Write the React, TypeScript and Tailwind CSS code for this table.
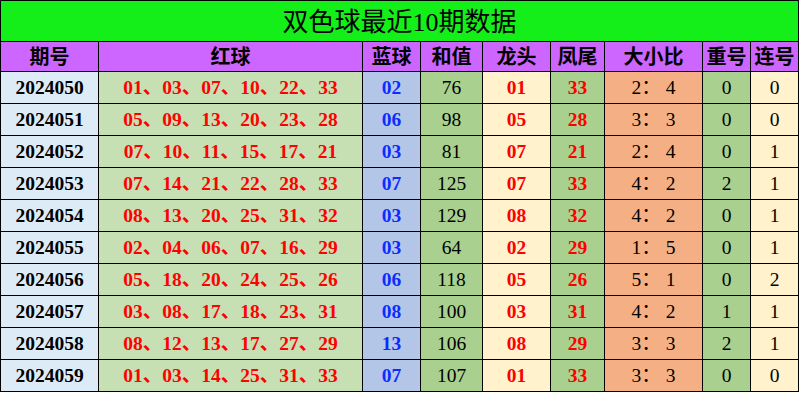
import React from "react";

const rows: [string, string, string, string, string, string, string, string, string][] = [
  ["2024050", "01、03、07、10、22、33", "02", "76", "01", "33", "2： 4", "0", "0"],
  ["2024051", "05、09、13、20、23、28", "06", "98", "05", "28", "3： 3", "0", "0"],
  ["2024052", "07、10、11、15、17、21", "03", "81", "07", "21", "2： 4", "0", "1"],
  ["2024053", "07、14、21、22、28、33", "07", "125", "07", "33", "4： 2", "2", "1"],
  ["2024054", "08、13、20、25、31、32", "03", "129", "08", "32", "4： 2", "0", "1"],
  ["2024055", "02、04、06、07、16、29", "03", "64", "02", "29", "1： 5", "0", "1"],
  ["2024056", "05、18、20、24、25、26", "06", "118", "05", "26", "5： 1", "0", "2"],
  ["2024057", "03、08、17、18、23、31", "08", "100", "03", "31", "4： 2", "1", "1"],
  ["2024058", "08、12、13、17、27、29", "13", "106", "08", "29", "3： 3", "2", "1"],
  ["2024059", "01、03、14、25、31、33", "07", "107", "01", "33", "3： 3", "0", "0"],
];

const headers = ["期号", "红球", "蓝球", "和值", "龙头", "凤尾", "大小比", "重号", "连号"];

const cellStyles = [
  "bg-[#ddebf7] font-bold text-black",
  "bg-[#c6e0b4] font-bold text-[#ff0000]",
  "bg-[#b4c6e7] font-bold text-[#0a2cff]",
  "bg-[#a9d08e] text-black",
  "bg-[#fff2cc] font-bold text-[#ff0000]",
  "bg-[#a9d08e] font-bold text-[#ff0000]",
  "bg-[#f4b084] text-black",
  "bg-[#a9d08e] text-black",
  "bg-[#fff2cc] text-black",
];

export default function App() {
  return (
    <div
      className="w-[799px] bg-black p-px flex flex-col gap-px"
      style={{ fontFamily: '"Liberation Serif", "Noto Sans CJK SC", serif' }}
    >
      <div className="h-[40px] bg-[#14ef1a] flex items-center justify-center text-[26px] text-black pt-[2px]">
        双色球最近10期数据
      </div>
      <div className="grid grid-cols-[97px_263px_57px_61px_67px_53px_97px_47px_47px] gap-px">
        {headers.map((h) => (
          <div
            key={h}
            className="h-[29px] bg-[#cc66ff] flex items-center justify-center text-[20px] font-bold text-black"
          >
            {h}
          </div>
        ))}
        {rows.map((r) =>
          r.map((v, i) => (
            <div
              key={r[0] + "-" + i}
              className={
                "h-[31px] flex items-center justify-center pt-px text-[19.5px] leading-none " +
                cellStyles[i]
              }
            >
              {v}
            </div>
          ))
        )}
      </div>
    </div>
  );
}
